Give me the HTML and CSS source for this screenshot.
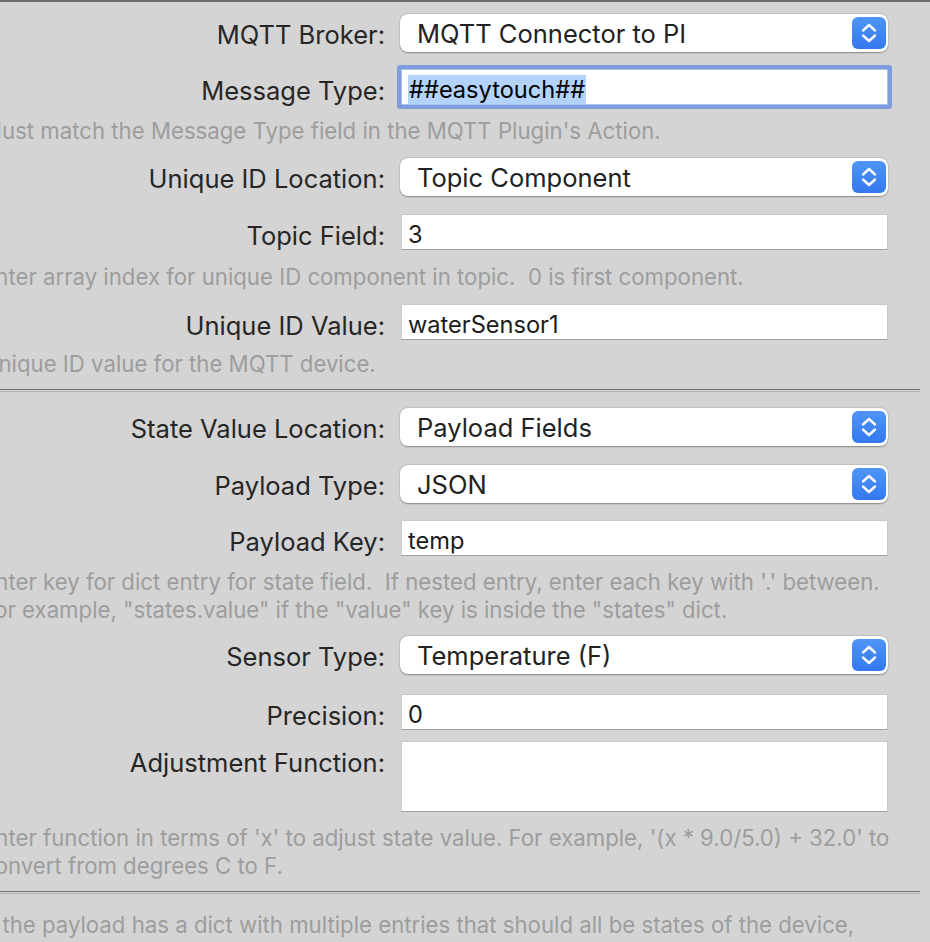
FILE: index.html
```html
<!DOCTYPE html>
<html>
<head>
<meta charset="utf-8">
<link rel="stylesheet" href="styles.css">
</head>
<body>
<div class="window">
  <div class="panel">
    <div class="row p mt12">
      <span class="lbl">MQTT Broker:</span>
      <div class="popup"><span class="ptext">MQTT Connector to PI</span><span class="stepper"><svg viewBox="0 0 34 32" width="34" height="32"><path d="M11 13.5 L17 8 L23 13.5 M11 18.5 L17 24 L23 18.5" fill="none" stroke="#fff" stroke-width="2.4" stroke-linecap="round" stroke-linejoin="round"/></svg></span></div>
    </div>
    <div class="row f mt17">
      <span class="lbl">Message Type:</span>
      <div class="field focused"><span class="sel">##easytouch##</span></div>
    </div>
    <p class="help mt12">Must match the Message Type field in the MQTT Plugin's Action.</p>
    <div class="row p mt13">
      <span class="lbl">Unique ID Location:</span>
      <div class="popup"><span class="ptext">Topic Component</span><span class="stepper"><svg viewBox="0 0 34 32" width="34" height="32"><path d="M11 13.5 L17 8 L23 13.5 M11 18.5 L17 24 L23 18.5" fill="none" stroke="#fff" stroke-width="2.4" stroke-linecap="round" stroke-linejoin="round"/></svg></span></div>
    </div>
    <div class="row f mt18">
      <span class="lbl">Topic Field:</span>
      <div class="field">3</div>
    </div>
    <p class="help mt13">Enter array index for unique ID component in topic.&nbsp; 0 is first component.</p>
    <div class="row f mt13">
      <span class="lbl">Unique ID Value:</span>
      <div class="field">waterSensor1</div>
    </div>
    <p class="help mt10">Unique ID value for the MQTT device.</p>
    <div class="sep mt11"></div>
    <div class="row p mt16">
      <span class="lbl">State Value Location:</span>
      <div class="popup"><span class="ptext">Payload Fields</span><span class="stepper"><svg viewBox="0 0 34 32" width="34" height="32"><path d="M11 13.5 L17 8 L23 13.5 M11 18.5 L17 24 L23 18.5" fill="none" stroke="#fff" stroke-width="2.4" stroke-linecap="round" stroke-linejoin="round"/></svg></span></div>
    </div>
    <div class="row p mt19">
      <span class="lbl">Payload Type:</span>
      <div class="popup"><span class="ptext">JSON</span><span class="stepper"><svg viewBox="0 0 34 32" width="34" height="32"><path d="M11 13.5 L17 8 L23 13.5 M11 18.5 L17 24 L23 18.5" fill="none" stroke="#fff" stroke-width="2.4" stroke-linecap="round" stroke-linejoin="round"/></svg></span></div>
    </div>
    <div class="row f mt17">
      <span class="lbl">Payload Key:</span>
      <div class="field">temp</div>
    </div>
    <p class="help mt12">Enter key for dict entry for state field.&nbsp; If nested entry, enter each key with '.' between.<br>For example, "states.value" if the "value" key is inside the "states" dict.</p>
    <div class="row p mt12">
      <span class="lbl">Sensor Type:</span>
      <div class="popup"><span class="ptext">Temperature (F)</span><span class="stepper"><svg viewBox="0 0 34 32" width="34" height="32"><path d="M11 13.5 L17 8 L23 13.5 M11 18.5 L17 24 L23 18.5" fill="none" stroke="#fff" stroke-width="2.4" stroke-linecap="round" stroke-linejoin="round"/></svg></span></div>
    </div>
    <div class="row f mt20">
      <span class="lbl">Precision:</span>
      <div class="field">0</div>
    </div>
    <div class="row top mt11">
      <span class="lbl lbl-top">Adjustment Function:</span>
      <div class="field area"></div>
    </div>
    <p class="help mt12">Enter function in terms of 'x' to adjust state value. For example, '(x * 9.0/5.0) + 32.0' to<br>convert from degrees C to F.</p>
    <div class="sep mt11"></div>
    <p class="help mt17">If the payload has a dict with multiple entries that should all be states of the device,<br>enter the key for that dict here, and each entry will be added as a device state.</p>
  </div>
</div>
</body>
</html>
```
FILE: styles.css
```css
html, body {
  margin: 0;
  padding: 0;
  background: #d4d4d4;
  overflow: hidden;
}
.window {
  border-top: 2px solid #6a6a6a;
  width: 930px;
  height: 940px;
  overflow: hidden;
  font-family: Inter, "Noto Sans", sans-serif;
}
.panel {
  margin-left: -14px;
  width: 934px;
  display: flex;
  flex-direction: column;
}
.row {
  display: flex;
  align-items: center;
}
.row.top {
  align-items: flex-start;
}
.lbl {
  width: 399px;
  padding-right: 15px;
  box-sizing: content-box;
  text-align: right;
  font-size: 25.5px;
  color: #262626;
  white-space: nowrap;
  line-height: 26px;
}
.row.p .lbl {
  padding-top: 3px;
}
.row.f .lbl {
  padding-top: 7px;
}
.row.top .lbl-top {
  padding-top: 9px;
}
.popup {
  width: 488px;
  height: 38px;
  box-sizing: border-box;
  background: #fff;
  border-radius: 8px;
  box-shadow: 0 0.5px 1.5px rgba(0,0,0,0.35), 0 0 0 0.5px rgba(0,0,0,0.06);
  display: flex;
  align-items: center;
  justify-content: space-between;
  padding: 0 2px 0 17px;
}
.ptext {
  font-size: 25.5px;
  color: #222;
  white-space: nowrap;
}
.stepper {
  width: 34px;
  height: 32px;
  border-radius: 6px;
  background: linear-gradient(#4f95f7, #3478f0);
  display: flex;
}
.field {
  margin-left: 1px;
  width: 487px;
  height: 36px;
  box-sizing: border-box;
  background: #fff;
  border: 1px solid #c9c9c9;
  border-bottom-color: #a2a2a2;
  font-size: 23.6px;
  color: #1b1b1b;
  padding: 5px 6px 0;
  display: flex;
  align-items: center;
  white-space: nowrap;
}
.field.area {
  height: 71px;
}
.field.focused {
  border: 1px solid #aac1ee;
  box-shadow: 0 0 0 4px #7d9ddf;
  border-radius: 1px;
}
.sel {
  background: #b4d3fb;
  color: #000;
  padding: 0 1px;
}
.help {
  margin-bottom: 0;
  margin-left: -4px;
  font-size: 22.2px;
  line-height: 28px;
  color: #9d9d9d;
  white-space: nowrap;
}
.sep {
  width: 934px;
  height: 1px;
  border-top: 1px solid #6e6e6e;
  border-bottom: 1px solid #b3b3b3;
}
.mt10 { margin-top: 10px; }
.mt11 { margin-top: 11px; }
.mt12 { margin-top: 12px; }
.mt13 { margin-top: 13px; }
.mt16 { margin-top: 16px; }
.mt17 { margin-top: 17px; }
.mt18 { margin-top: 18px; }
.mt19 { margin-top: 19px; }
.mt20 { margin-top: 20px; }
```
